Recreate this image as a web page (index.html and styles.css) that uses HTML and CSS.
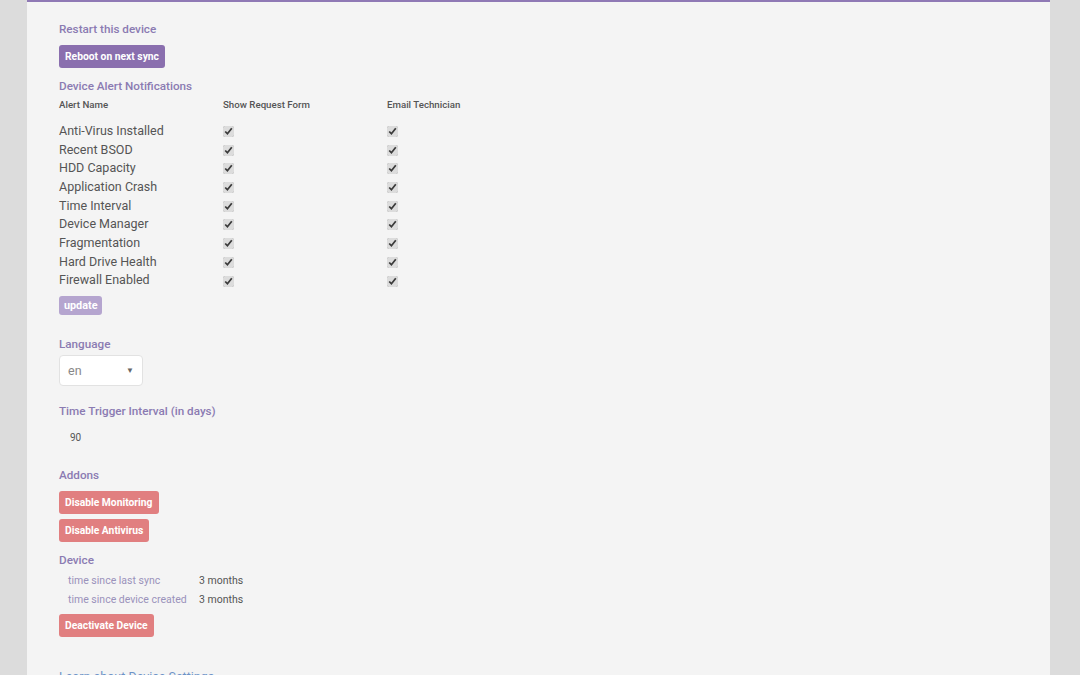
FILE: index.html
```html
<!DOCTYPE html>
<html lang="en">
<head>
    <meta charset="UTF-8">
    <title>Device Settings</title>
    <link rel="stylesheet" href="styles.css">
</head>
<body>

    <div class="panel">

        <!-- Restart -->
        <h4 class="section-title first">Restart this device</h4>
        <button class="btn btn-purple">Reboot on next sync</button>

        <!-- Alerts -->
        <h4 class="section-title alerts-title">Device Alert Notifications</h4>
        <table class="alerts">
            <thead>
                <tr>
                    <th class="col-name">Alert Name</th>
                    <th class="col-check">Show Request Form</th>
                    <th>Email Technician</th>
                </tr>
            </thead>
            <tbody>
                <tr><td>Anti-Virus Installed</td><td><input type="checkbox" checked></td><td><input type="checkbox" checked></td></tr>
                <tr><td>Recent BSOD</td><td><input type="checkbox" checked></td><td><input type="checkbox" checked></td></tr>
                <tr><td>HDD Capacity</td><td><input type="checkbox" checked></td><td><input type="checkbox" checked></td></tr>
                <tr><td>Application Crash</td><td><input type="checkbox" checked></td><td><input type="checkbox" checked></td></tr>
                <tr><td>Time Interval</td><td><input type="checkbox" checked></td><td><input type="checkbox" checked></td></tr>
                <tr><td>Device Manager</td><td><input type="checkbox" checked></td><td><input type="checkbox" checked></td></tr>
                <tr><td>Fragmentation</td><td><input type="checkbox" checked></td><td><input type="checkbox" checked></td></tr>
                <tr><td>Hard Drive Health</td><td><input type="checkbox" checked></td><td><input type="checkbox" checked></td></tr>
                <tr><td>Firewall Enabled</td><td><input type="checkbox" checked></td><td><input type="checkbox" checked></td></tr>
            </tbody>
        </table>
        <button class="btn btn-light btn-small">update</button>

        <!-- Language -->
        <h4 class="section-title language-title">Language</h4>
        <div class="select-box">
            <span>en</span>
            <span class="caret">&#9660;</span>
        </div>

        <!-- Time trigger -->
        <h4 class="section-title interval-title">Time Trigger Interval (in days)</h4>
        <p class="interval">90</p>

        <!-- Addons -->
        <h4 class="section-title addons-title">Addons</h4>
        <div class="btn-stack">
            <button class="btn btn-red">Disable Monitoring</button>
            <button class="btn btn-red">Disable Antivirus</button>
        </div>

        <!-- Device -->
        <h4 class="section-title device-title">Device</h4>
        <table class="device-info">
            <tr><td class="info-label">time since last sync</td><td>3 months</td></tr>
            <tr><td class="info-label">time since device created</td><td>3 months</td></tr>
        </table>
        <button class="btn btn-red">Deactivate Device</button>

        <a class="learn-link" href="#">Learn about Device Settings</a>
    </div>

</body>
</html>
```

FILE: styles.css
```css
/* General Styles */
body {
    font-family: 'Roboto', 'Liberation Sans', sans-serif;
    background-color: #dcdcdc;
    color: #555;
    margin: 0;
    padding: 0;
    height: 675px;
    overflow: hidden;
}

.panel {
    background-color: #f4f4f4;
    border-top: 2px solid #8f79b5;
    margin: 0 30px 0 27px;
    padding: 14px 32px 40px;
    min-height: 700px;
    display: flex;
    flex-direction: column;
    align-items: flex-start;
}

.section-title {
    font-size: 11.7px;
    font-weight: 500;
    color: #8b7bb2;
    margin: 8px 0 4px;
}

.section-title.first {
    margin-top: 6px;
    margin-bottom: 9px;
}

.alerts-title {
    margin-top: 11px;
    margin-bottom: 6px;
}

.language-title {
    margin-top: 22px;
    margin-bottom: 4px;
}

.interval-title {
    margin-top: 18px;
    margin-bottom: 4px;
}

.addons-title {
    margin-top: 25px;
    margin-bottom: 9px;
}

.device-title {
    margin-top: 11px;
    margin-bottom: 4px;
}

.btn {
    font-family: inherit;
    font-size: 10.3px;
    font-weight: 700;
    color: #fff;
    border: none;
    border-radius: 3px;
    padding: 0 6px;
    height: 23px;
    cursor: pointer;
}

.btn-purple {
    background-color: #8a6fae;
}

.btn-light {
    background-color: #b5a5cf;
}

.btn-small {
    height: 19px;
    font-size: 10.8px;
    padding: 0 5px;
    margin-top: 7px;
}

.btn-red {
    background-color: #e17f80;
}

.btn-stack {
    display: flex;
    flex-direction: column;
    align-items: flex-start;
    gap: 5px;
}

/* Alerts table */
.alerts {
    border-collapse: collapse;
    font-size: 12.5px;
}

.alerts th {
    font-size: 9.7px;
    font-weight: 500;
    color: #555;
    text-align: left;
    padding: 0 0 11px;
}

.alerts .col-name,
.alerts .col-check {
    width: 164px;
}

.alerts td {
    padding: 0;
    height: 18.7px;
    color: #555;
}

.alerts input {
    margin: 0;
    width: 11px;
    height: 11px;
    vertical-align: middle;
    accent-color: #dcdcdc;
}

/* Language select */
.select-box {
    width: 84px;
    height: 31px;
    box-sizing: border-box;
    background-color: #fff;
    border: 1px solid #e2e2e2;
    border-radius: 4px;
    display: flex;
    align-items: center;
    justify-content: space-between;
    padding: 0 8px 0 8px;
    font-size: 12.5px;
    color: #888;
}

.caret {
    font-size: 8px;
    color: #666;
}

.interval {
    font-size: 10px;
    color: #555;
    margin: 10px 0 0 11px;
}

/* Device info */
.device-info {
    border-collapse: collapse;
    font-size: 10.5px;
    margin: 0 0 5px 9px;
}

.device-info td {
    padding: 0;
    height: 19px;
    color: #555;
}

.device-info .info-label {
    width: 131px;
    color: #9a92bb;
}

.learn-link {
    margin-top: 32px;
    font-size: 12.5px;
    color: #6d93c8;
    text-decoration: none;
}
```
